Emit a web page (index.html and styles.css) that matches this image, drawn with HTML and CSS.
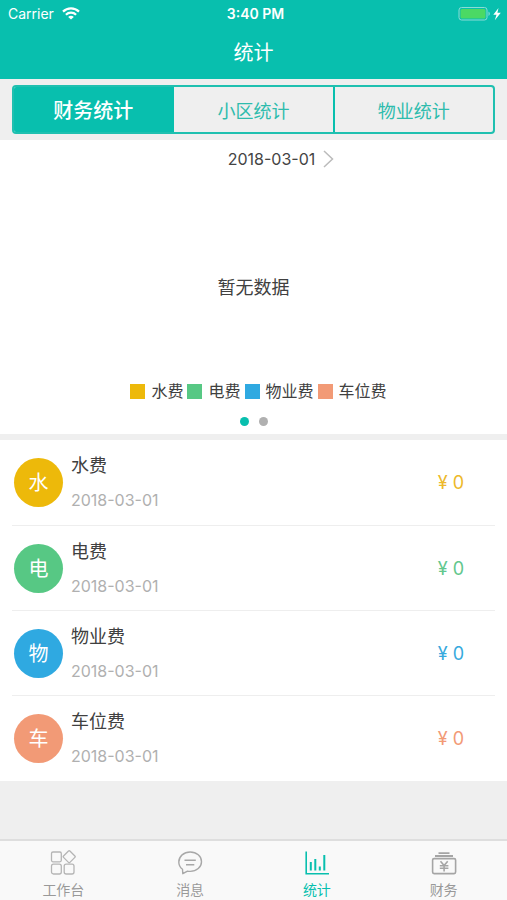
FILE: index.html
```
<!DOCTYPE html>
<html lang="zh-CN">
<head>
<meta charset="utf-8">
<meta name="viewport" content="width=device-width, initial-scale=1">
<title>统计</title>
<link rel="stylesheet" href="styles.css">
</head>
<body>
<header class="header">
  <div class="status">
    <div class="status-left">
      <span>Carrier</span>
      <svg width="18" height="13" viewBox="0 0 18 13" fill="none" stroke="#fff" stroke-width="2.2"><path d="M1 4.6C5.4.3 12.6.3 17 4.6M3.9 7.8c2.8-2.8 7.4-2.8 10.2 0"/><path d="M9 12.6 6.2 9.9c1.6-1.5 4-1.5 5.6 0z" fill="#fff" stroke="none"/></svg>
    </div>
    <span class="status-time">3:40 PM</span>
    <div class="status-right">
      <svg width="45" height="16" viewBox="0 0 45 16"><rect x="1" y="1.500" width="28" height="12.500" rx="2.500" fill="none" stroke="#8bdcd5"/><rect x="2.500" y="3" width="25" height="9.500" rx="1.500" fill="#4bd964"/><path d="M30.500 5.500c1.800.7 1.800 3.700 0 4.400z" fill="#8bdcd5"/><path d="m40.500 2-5.200 6.700h3.200L36.800 14.200l6-7.500h-3.400z" fill="#fff"/></svg>
    </div>
  </div>
  <h1 class="title">统计</h1>
</header>
<main class="content">
  <div class="segment-strip">
    <div class="segments">
      <button class="segment segment-active" type="button">财务统计</button>
      <button class="segment" type="button">小区统计</button>
      <button class="segment" type="button">物业统计</button>
    </div>
  </div>
  <section class="chart">
    <button class="date-picker" type="button">2018-03-01
      <svg width="11" height="18" viewBox="0 0 11 18" fill="none" stroke="#bbb" stroke-width="1.500"><path d="m1 1 8.500 8L1 17"/></svg>
    </button>
    <p class="empty">暂无数据</p>
    <ul class="legend">
      <li><i class="swatch water"></i>水费</li>
      <li><i class="swatch power"></i>电费</li>
      <li><i class="swatch estate"></i>物业费</li>
      <li><i class="swatch parking"></i>车位费</li>
    </ul>
    <div class="dots"><i class="dot dot-active"></i><i class="dot"></i></div>
  </section>
  <ul class="fees">
    <li class="fee">
      <span class="avatar water">水</span>
      <div class="fee-info"><h2>水费</h2><time>2018-03-01</time></div>
      <span class="amount water-text">¥ 0</span>
    </li>
    <li class="fee">
      <span class="avatar power">电</span>
      <div class="fee-info"><h2>电费</h2><time>2018-03-01</time></div>
      <span class="amount power-text">¥ 0</span>
    </li>
    <li class="fee">
      <span class="avatar estate">物</span>
      <div class="fee-info"><h2>物业费</h2><time>2018-03-01</time></div>
      <span class="amount estate-text">¥ 0</span>
    </li>
    <li class="fee">
      <span class="avatar parking">车</span>
      <div class="fee-info"><h2>车位费</h2><time>2018-03-01</time></div>
      <span class="amount parking-text">¥ 0</span>
    </li>
  </ul>
</main>
<nav class="tabbar">
  <a class="tab" href="#work">
    <svg width="26" height="26" viewBox="0 0 26 26" fill="none" stroke="#b5b5b5" stroke-width="1.300"><rect x="1.500" y="2" width="9.800" height="9.800" rx="1.500"/><rect x="1.500" y="14.200" width="9.800" height="9.800" rx="2"/><rect x="14.200" y="14.200" width="9.800" height="9.800" rx="2"/><rect x="14.700" y="2.200" width="9" height="9" rx="1" transform="rotate(45 19.200 6.700)"/></svg>
    <span>工作台</span>
  </a>
  <a class="tab" href="#messages">
    <svg width="26" height="26" viewBox="0 0 26 26" fill="none" stroke="#a8a8a8" stroke-width="1.400" stroke-linejoin="round"><path d="M5.500 19.300C3 17.500 1.800 14.900 1.800 12 1.800 6.300 6.800 2 13.200 2s11.300 4.300 11.300 9.700-4.900 9.700-11.300 9.700c-1 0-1.900-.1-2.700-.3L5.800 23.700z"/><path d="M7.500 10.200h11.300M9 14.700h8.300"/></svg>
    <span>消息</span>
  </a>
  <a class="tab tab-active" href="#stats" aria-current="page">
    <svg width="26" height="26" viewBox="0 0 26 26" fill="none" stroke="#08bfae" stroke-width="1.600"><path d="M2.200 1.500v22.300H25"/><path d="M6.800 12v8.500M11.300 9v11.500M15.800 16.500v4M20.300 5v15.500" stroke-width="2"/></svg>
    <span>统计</span>
  </a>
  <a class="tab" href="#finance">
    <svg width="26" height="26" viewBox="0 0 26 26" fill="none" stroke="#a5a5a5" stroke-width="1.600"><path d="M7.500 3.200h11M4 6h18" stroke-width="1.800"/><rect x="1.600" y="8.600" width="23" height="15" rx="1.500"/><path d="m9.500 11.200 3.600 4.300 3.600-4.300M8.800 15.700h8.600M8.800 18.300h8.600M13.100 15.500v6"/></svg>
    <span>财务</span>
  </a>
</nav>
</body>
</html>
```
FILE: styles.css
```
* {
  box-sizing: border-box;
}

body {
  margin: 0;
  min-height: 100vh;
  display: flex;
  flex-direction: column;
  background: #efefef;
  color: #404040;
  font-family: Inter, "Noto Sans CJK SC", sans-serif;
}

h1, h2, p, ul {
  margin: 0;
  padding: 0;
  font-weight: 400;
  list-style: none;
}

button {
  font: inherit;
  cursor: pointer;
}

svg {
  display: block;
}

.header {
  background: #08bfae;
  color: #fff;
}

.status {
  display: grid;
  grid-template-columns: 1fr auto 1fr;
  align-items: center;
  height: 27px;
  padding: 0 4px 0 8px;
  font-size: 14px;
}

.status-left {
  display: flex;
  align-items: center;
  gap: 8px;
}

.status-time {
  font-weight: 600;
}

.status-right {
  justify-self: end;
}

.title {
  height: 52px;
  font-size: 20px;
  line-height: 52px;
  text-align: center;
}

.content {
  flex: 1;
}

.segment-strip {
  padding: 6px 12px;
}

.segments {
  display: flex;
  height: 49px;
  border: 2px solid #1fc0b0;
  border-radius: 4px;
  overflow: hidden;
}

.segment {
  flex: 1;
  padding: 0;
  border: 0;
  background: none;
  color: #2ebcad;
  font-size: 18px;
}

.segment + .segment {
  border-left: 2px solid #08bfae;
}

.segment-active {
  background: #08bfae;
  color: #fff;
  font-size: 20px;
  font-weight: 500;
}

.chart {
  display: flex;
  flex-direction: column;
  align-items: center;
  padding-bottom: 8px;
  background: #fff;
}

.date-picker {
  display: flex;
  align-items: center;
  gap: 8px;
  height: 38px;
  margin-left: 55px;
  padding: 0;
  border: 0;
  background: none;
  color: #444;
  font-size: 16px;
}

.empty {
  padding: 97px 0 78px;
  font-size: 18px;
  line-height: 26px;
}

.legend {
  display: flex;
  gap: 4px;
  margin-left: 10px;
  font-size: 16px;
  line-height: 24px;
}

.legend li {
  display: flex;
  align-items: center;
  gap: 6px;
}

.swatch {
  width: 15px;
  height: 15px;
}

.dots {
  display: flex;
  gap: 10px;
  padding-top: 14px;
}

.dot {
  width: 9px;
  height: 9px;
  border-radius: 50%;
  background: #b0b0b0;
}

.dot-active {
  background: #08bfae;
}

.fees {
  margin-top: 6px;
  padding: 0 12px 1px;
  background: #fff;
}

.fee {
  display: flex;
  align-items: center;
  height: 85px;
  padding: 0 31px 0 2px;
}

.fee + .fee {
  border-top: 1px solid #eee;
}

.avatar {
  width: 49px;
  height: 49px;
  border-radius: 50%;
  color: #fff;
  font-size: 20px;
  line-height: 51px;
  text-align: center;
}

.fee-info {
  flex: 1;
  display: flex;
  flex-direction: column;
  gap: 9px;
  padding-left: 8px;
}

.fee-info h2 {
  font-size: 18px;
  line-height: 26px;
}

.fee-info time {
  color: #b0b0b0;
  font-size: 16px;
  line-height: 24px;
}

.amount {
  font-size: 18px;
}

.water { background: #edb90a; }
.power { background: #57c884; }
.estate { background: #2fa9e1; }
.parking { background: #f29a76; }

.water-text { color: #edb92a; }
.power-text { color: #62c78d; }
.estate-text { color: #36a9dd; }
.parking-text { color: #f29a76; }

.tabbar {
  display: flex;
  height: 61px;
  padding-top: 9px;
  border-top: 2px solid #dedede;
  background: #f9f9f9;
}

.tab {
  flex: 1;
  display: flex;
  flex-direction: column;
  align-items: center;
  gap: 4px;
  color: #999;
  font-size: 14px;
  line-height: 20px;
  text-decoration: none;
}

.tab-active {
  color: #08bfae;
}
```
